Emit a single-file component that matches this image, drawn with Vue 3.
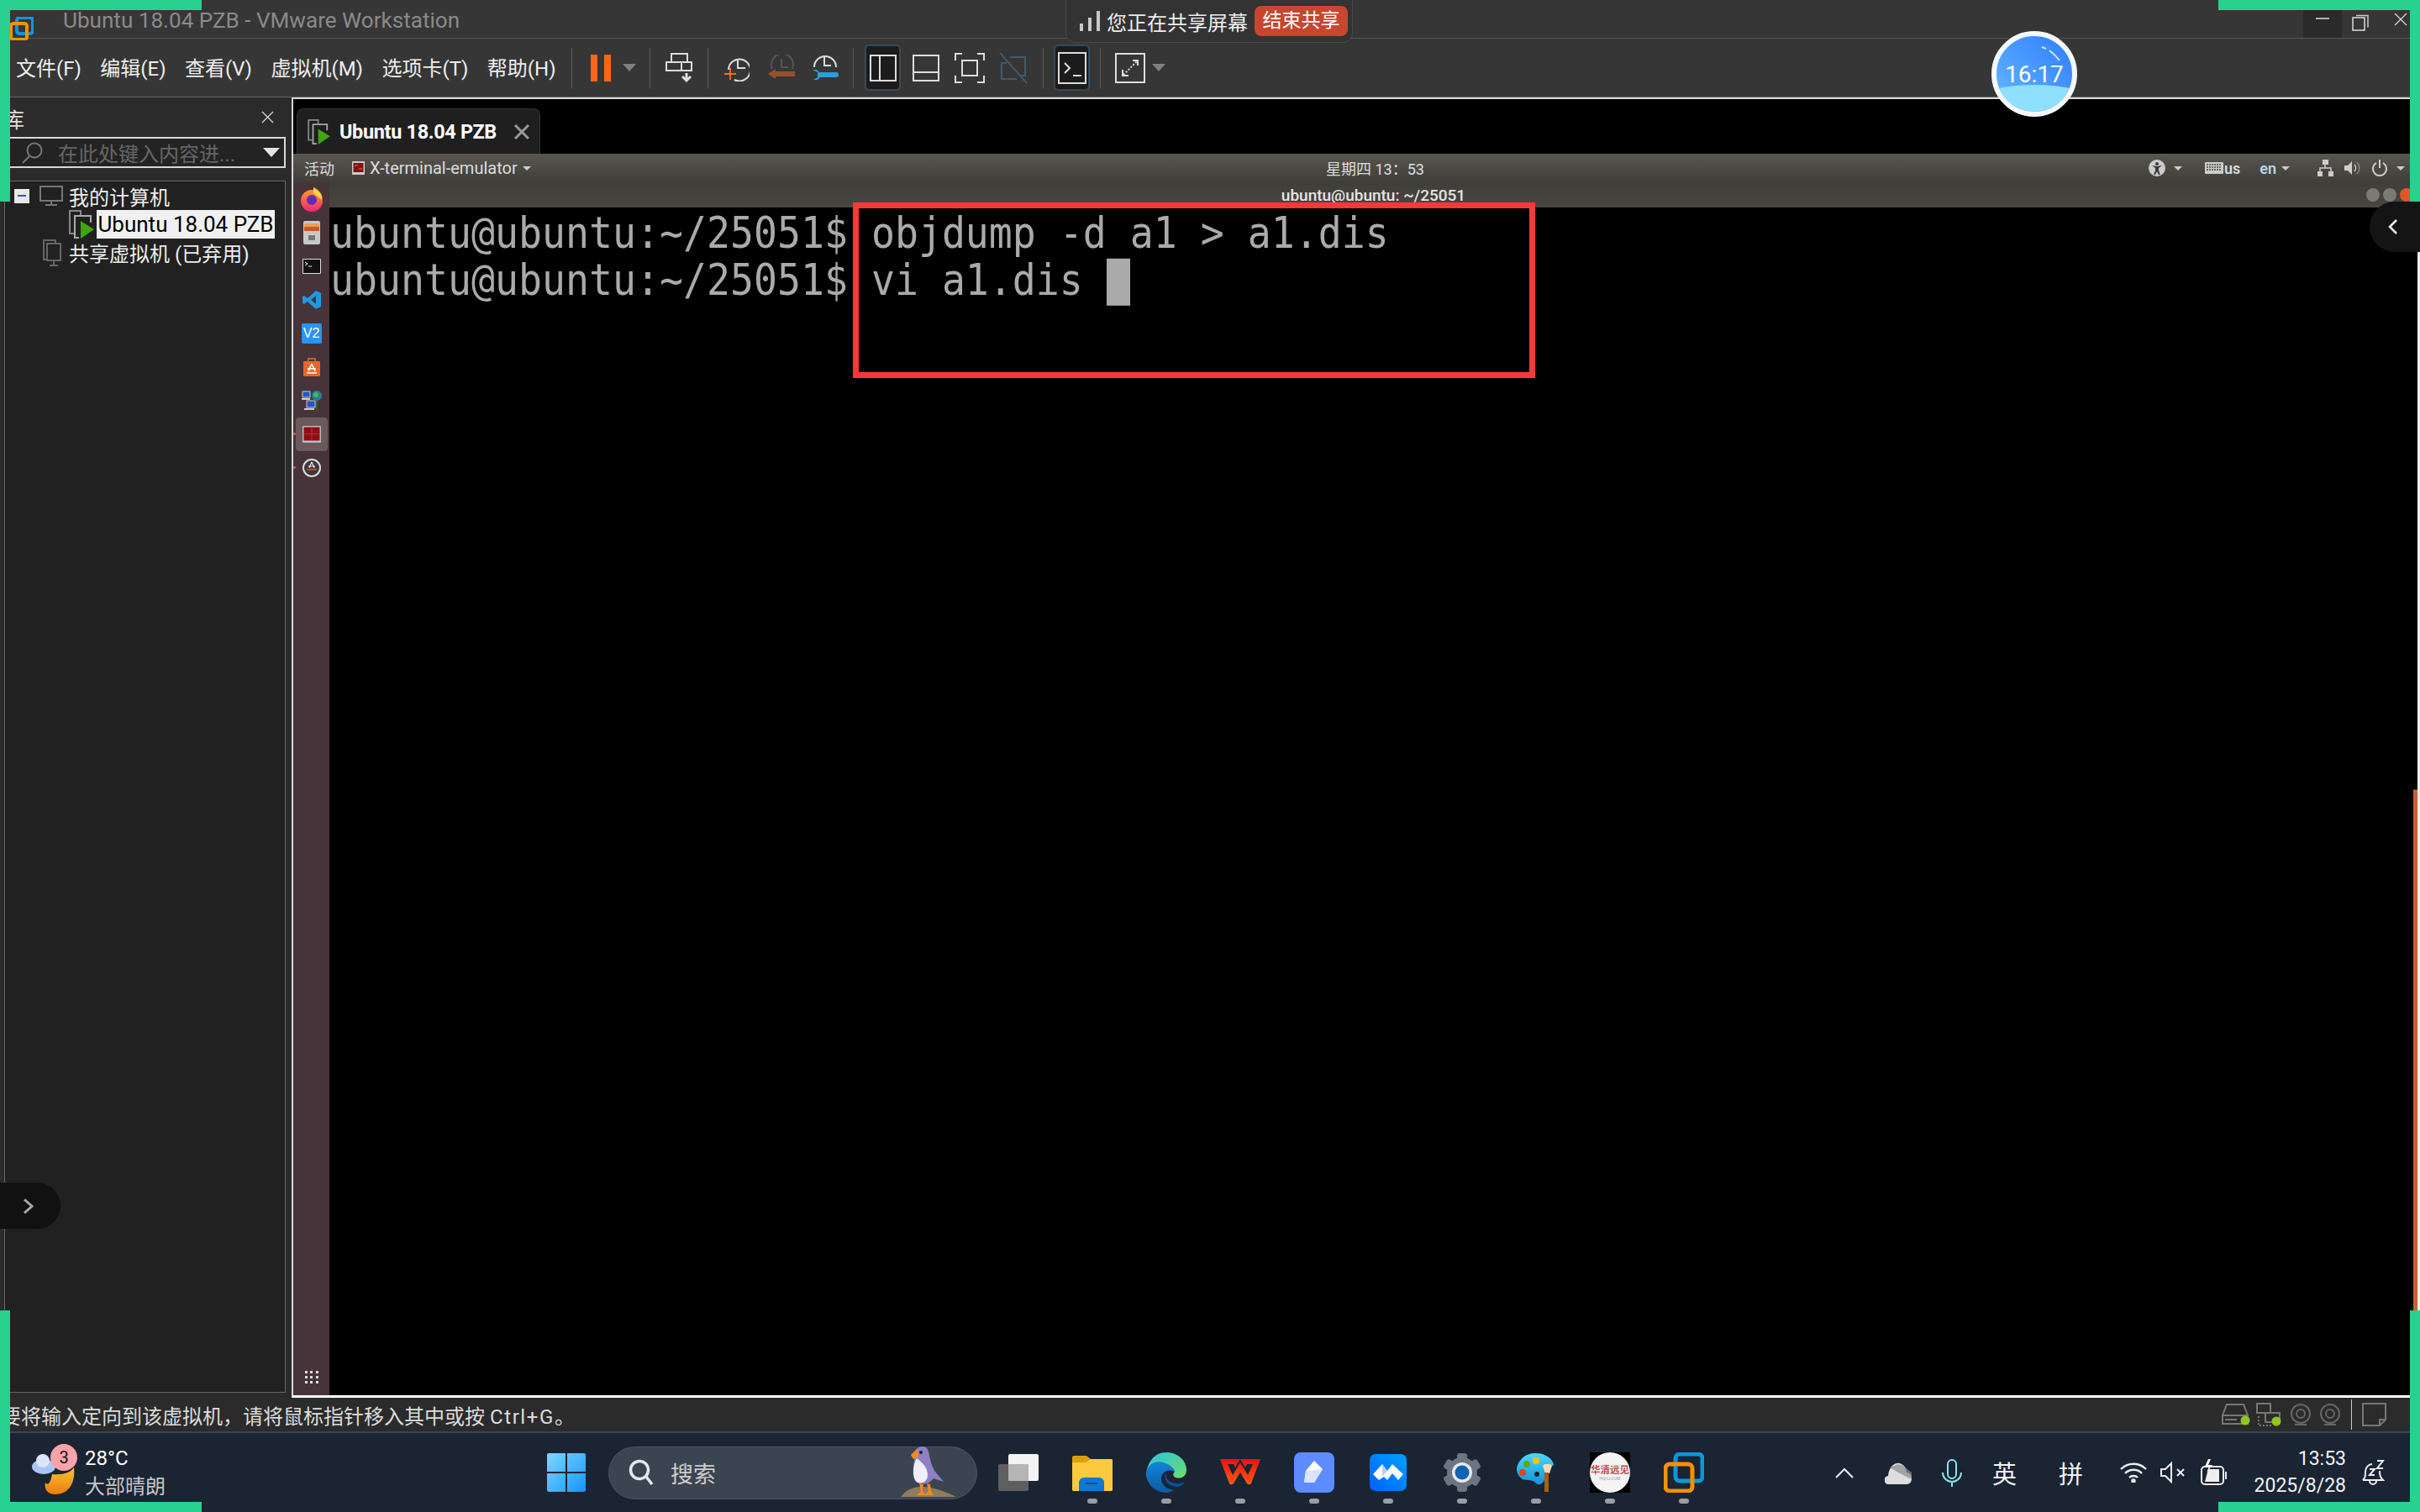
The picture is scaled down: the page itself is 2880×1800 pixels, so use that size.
<script setup>
const menus = ['文件(F)', '编辑(E)', '查看(V)', '虚拟机(M)', '选项卡(T)', '帮助(H)']
</script>

<template>
  <div class="screen">
    <header class="titlebar">
      <svg class="app-logo" viewBox="0 0 28 28"><rect x="8" y="1" width="19" height="19" rx="3" fill="none" stroke="#1296d8" stroke-width="4"/><rect x="1" y="8" width="19" height="19" rx="3" fill="none" stroke="#f59100" stroke-width="4"/></svg>
      <span class="title-text">Ubuntu 18.04 PZB - VMware Workstation</span>
      <div class="win-controls">
        <div class="wc wc-min"><svg viewBox="0 0 46 33" width="46" height="33"><path d="M15 10h16" stroke="#ddd" stroke-width="1.5"/></svg></div>
        <div class="wc wc-max"><svg viewBox="0 0 20 22" width="20" height="22"><path d="M5 3.500h14v14" fill="none" stroke="#ccc" stroke-width="1.500"/><rect x="1" y="6" width="14" height="15" fill="#363636" stroke="#ddd" stroke-width="1.500"/></svg></div>
        <div class="wc wc-close"><svg viewBox="0 0 16 16" width="16" height="16"><path d="M1 1l14 14M15 1L1 15" stroke="#ddd" stroke-width="1.200"/></svg></div>
      </div>
    </header>

    <nav class="toolbar">
      <div class="menus"><span v-for="m in menus" :key="m">{{ m }}</span></div>
      <i class="sep s1"></i>
      <svg class="t-pause" width="24" height="32" viewBox="0 0 24 32"><rect width="8" height="32" fill="#ff6418"/><rect x="16" width="8" height="32" fill="#ff6418"/></svg>
      <svg class="t-drop m14" width="16" height="9" viewBox="0 0 16 9"><path d="M0 0h16L8 9z" fill="#808080"/></svg>
      <i class="sep m16"></i>
      <svg class="m18" width="32" height="36" viewBox="0 0 32 36" fill="none" stroke="#ddd" stroke-width="2"><path d="M7 11V1h19v10"/><path d="M1 11h30v10H1zM19 11v10"/><path d="M25 24v9M20 28l5 5 5-5" stroke-width="3"/></svg>
      <i class="sep m18"></i>
      <svg class="m19" width="30" height="32" viewBox="0 0 30 32" fill="none"><path d="M5 18a13 13 0 1 1 7 12" stroke="#ddd" stroke-width="2"/><path d="M16 6v10h9" stroke="#ddd" stroke-width="2"/><path d="M0 23h14M7 16v14" stroke="#ff6a1c" stroke-width="2"/></svg>
      <svg class="m22" width="32" height="32" viewBox="0 0 32 32" fill="none"><path d="M5 17a13 13 0 1 1 24 0" stroke="#555" stroke-width="2"/><path d="M16 5v10h8" stroke="#555" stroke-width="2"/><path d="M0 23l9-6v3h23v6H9v3z" fill="#95502a"/></svg>
      <svg class="m20" width="32" height="32" viewBox="0 0 32 32" fill="none"><path d="M3 15a13 13 0 1 1 26 0" stroke="#ddd" stroke-width="2"/><path d="M15 3v10h8" stroke="#ddd" stroke-width="2"/><path d="M1 18h5l3 3h20a3 3 0 0 1 0 6H10l-3 3H2l5-3v-6z" fill="#2b9de0"/></svg>
      <i class="sep m17"></i>
      <div class="t-box m14"><svg width="32" height="32" viewBox="0 0 32 32" fill="none" stroke="#ddd" stroke-width="2"><path d="M1 1h30v30H1zM12 1v30"/></svg></div>
      <svg class="m15" width="32" height="32" viewBox="0 0 32 32" fill="none" stroke="#ddd" stroke-width="2"><path d="M1 1h30v30H1zM1 21h30"/></svg>
      <svg class="m18" width="36" height="36" viewBox="0 0 36 36" fill="none" stroke="#ddd" stroke-width="2"><path d="M9 1H1v8M27 1h8v8M9 35H1v-8M27 35h8v-8"/><path d="M9 9h18v18H9z"/></svg>
      <svg class="m16" width="36" height="36" viewBox="0 0 36 36" fill="none" stroke="#42596b" stroke-width="2"><path d="M2 0l32 36M14 5h18v22h-4M22 31H4V12h6"/></svg>
      <i class="sep m17"></i>
      <div class="t-box m13"><svg width="34" height="38" viewBox="0 0 34 38" fill="none" stroke="#ddd" stroke-width="2"><path d="M1 1h32v36H1z"/><path d="M8 13l6 6-6 6M18 28h10"/></svg></div>
      <i class="sep m13"></i>
      <svg class="m17" width="36" height="36" viewBox="0 0 36 36" fill="none" stroke="#ddd" stroke-width="2"><path d="M1 1h34v34H1z"/><path d="M10 26l16-16" stroke-dasharray="2 2"/><path d="M21 9h6v6M9 20v7h7"/></svg>
      <svg class="m8 t-drop" width="16" height="9" viewBox="0 0 16 9"><path d="M0 0h16L8 9z" fill="#808080"/></svg>
    </nav>

    <main class="main">
      <aside class="sidebar">
        <div class="lib-head">
          <span class="lib-name">库</span>
          <svg width="15" height="15" viewBox="0 0 15 15"><path d="M1 1l13 13M14 1L1 14" stroke="#ddd" stroke-width="1.200"/></svg>
        </div>
        <div class="lib-search">
          <svg width="26" height="26" viewBox="0 0 26 26" fill="none" stroke="#777" stroke-width="2"><circle cx="16" cy="10" r="8.500"/><path d="M10 17l-8 8"/></svg>
          <span class="placeholder">在此处键入内容进...</span>
          <svg class="search-drop" width="20" height="11" viewBox="0 0 20 11"><path d="M0 0h20L10 11z" fill="#e4e4e4"/></svg>
        </div>
        <div class="tree">
          <div class="tree-row r0">
            <span class="minus"><b></b></span>
            <svg width="28" height="24" viewBox="0 0 28 24" fill="none" stroke="#777" stroke-width="2"><path d="M1 1h26v17H1zM14 18v5M7 23h14"/></svg>
            <span>我的计算机</span>
          </div>
          <div class="tree-row r1">
            <svg width="31" height="34" viewBox="0 0 31 34" fill="none"><path d="M14 6V1H1v27h5" stroke="#888" stroke-width="2"/><path d="M26 15V7H7v26h5" stroke="#aaa" stroke-width="2"/><path d="M14 13l16 10-16 11z" fill="#3fa60f"/></svg>
            <span class="selected">Ubuntu 18.04 PZB</span>
          </div>
          <div class="tree-row r2">
            <svg width="22" height="32" viewBox="0 0 22 32" fill="none" stroke="#666" stroke-width="2"><path d="M15 4V1H1v23h3"/><path d="M5 5h16v20H5zM13 25v5M8 31h10"/></svg>
            <span>共享虚拟机 (已弃用)</span>
          </div>
        </div>
      </aside>

      <section class="vm">
        <div class="tabrow">
          <div class="tab">
            <svg width="28" height="30" viewBox="0 0 31 34" fill="none"><path d="M14 6V1H1v27h5" stroke="#888" stroke-width="2"/><path d="M26 15V7H7v26h5" stroke="#aaa" stroke-width="2"/><path d="M14 13l16 10-16 11z" fill="#3fa60f"/></svg>
            <span class="tab-text">Ubuntu 18.04 PZB</span>
            <svg class="tab-x" width="18" height="18" viewBox="0 0 18 18"><path d="M1 1l16 16M17 1L1 17" stroke="#999" stroke-width="3"/></svg>
          </div>
        </div>

        <div class="gnome-top">
          <div class="gt-left">
            <span class="gt-act">活动</span>
            <svg class="gt-term" width="15" height="16" viewBox="0 0 15 16"><rect width="15" height="16" rx="1" fill="#ccc"/><rect x="1.500" y="2" width="12" height="11" fill="#8a0f14"/><path d="M3 5h4M8 9h4" stroke="#e66" stroke-width="1"/></svg>
            <span class="gt-app">X-terminal-emulator</span>
            <i class="mini-arrow"></i>
          </div>
          <span class="gt-date">星期四 13：53</span>
          <div class="gt-right">
            <svg width="20" height="20" viewBox="0 0 20 20"><circle cx="10" cy="10" r="10" fill="#ccc"/><circle cx="10" cy="5" r="2" fill="#3c3b37"/><path d="M4 7l6 1 6-1-4 3v3l2 5h-2l-2-4-2 4H6l2-5v-3z" fill="#3c3b37"/></svg>
            <i class="mini-arrow a10"></i>
            <svg class="m27" width="22" height="14" viewBox="0 0 22 14"><rect width="22" height="14" rx="1" fill="#ccc"/><path d="M2 3h18M2 6h18M2 9h18" stroke="#444" stroke-width="1.500" stroke-dasharray="2 1"/></svg>
            <span class="gt-kb">us</span>
            <span class="gt-en">en</span>
            <i class="mini-arrow a6"></i>
            <svg class="m33" width="19" height="20" viewBox="0 0 19 20" fill="#ccc"><rect x="6" width="7" height="6"/><rect y="14" width="6" height="6"/><rect x="13" y="14" width="6" height="6"/><path d="M9 6v4M3 14v-4h13v4" fill="none" stroke="#ccc" stroke-width="1.500"/></svg>
            <svg class="m13" width="19" height="20" viewBox="0 0 19 20" fill="none"><path d="M0 7h4l5-5v16l-5-5H0z" fill="#ccc"/><path d="M12 6a6 6 0 0 1 0 8" stroke="#ccc" stroke-width="1.500"/><path d="M15 3a10 10 0 0 1 0 14" stroke="#888" stroke-width="1.500"/></svg>
            <svg class="m14" width="18" height="20" viewBox="0 0 18 20" fill="none" stroke="#ccc" stroke-width="2"><path d="M5 4a8 8 0 1 0 8 0M9 0v10"/></svg>
            <i class="mini-arrow a11"></i>
          </div>
        </div>

        <div class="desktop">
          <div class="dock">
            <div class="dock-item">
              <svg width="30" height="30" viewBox="0 0 30 30"><defs><linearGradient id="ff" x1="0" y1="0" x2="0" y2="1"><stop offset="0" stop-color="#ff9b20"/><stop offset="1" stop-color="#f0247d"/></linearGradient></defs><circle cx="15" cy="17" r="13" fill="url(#ff)"/><path d="M17 1c8 4 11 9 10 15L17 8z" fill="#ffd23c"/><circle cx="15" cy="16" r="6" fill="#5a2fb5"/></svg>
            </div>
            <div class="dock-item">
              <svg width="20" height="28" viewBox="0 0 20 28"><rect width="20" height="28" rx="2" fill="#c8c8c8"/><rect x="1" y="3" width="18" height="4" fill="#f19a5a"/><rect x="1" y="7" width="18" height="5" fill="#c15c22"/><rect x="6" y="17" width="8" height="6" fill="#777"/></svg>
            </div>
            <div class="dock-item">
              <svg width="22" height="18" viewBox="0 0 22 18"><rect width="22" height="18" rx="1" fill="#ddd"/><rect x="1" y="1" width="20" height="16" fill="#111"/><path d="M3 4l3 2-3 2M7 9h4" stroke="#eee" fill="none"/></svg>
            </div>
            <div class="dock-item">
              <svg width="22" height="22" viewBox="0 0 22 22"><path d="M16 0l6 3v16l-6 3L6 13l-4 3-2-1v-8l2-1 4 3zM16 6l-6 5 6 5z" fill="#1f9ae0" fill-rule="evenodd"/></svg>
            </div>
            <div class="dock-item"><span class="vm-badge">V2</span></div>
            <div class="dock-item">
              <svg width="20" height="22" viewBox="0 0 20 22"><path d="M6 4V1h8v3" fill="none" stroke="#e96c2f" stroke-width="1.500"/><rect y="4" width="20" height="18" rx="1" fill="#e8652a"/><path d="M10 7l-4 9M10 7l4 9M5 13h10M4 18h12" stroke="#fff" stroke-width="1.500"/></svg>
            </div>
            <div class="dock-item">
              <svg width="24" height="24" viewBox="0 0 24 24"><rect x="1" y="1" width="9" height="7" fill="#2456c9" stroke="#ccc"/><rect x="6" y="12" width="10" height="8" fill="#2456c9" stroke="#ccc"/><path d="M0 10h10M3 22h12" stroke="#ccc" stroke-width="2"/><path d="M18 12v12" stroke="#2b8a1b"/><circle cx="18" cy="6" r="6" fill="#2a7d9a"/><circle cx="17" cy="5" r="3" fill="#3fbb55"/></svg>
            </div>
            <div class="dock-item active">
              <i class="run-dot"></i>
              <svg width="22" height="20" viewBox="0 0 22 20"><rect width="22" height="20" rx="1" fill="#bbb"/><rect x="1.500" y="1.500" width="19" height="16" fill="#8e0f18"/><path d="M1.500 9.500h19M11 1.500v16" stroke="#c22a33"/></svg>
            </div>
            <div class="dock-item">
              <i class="run-dot"></i>
              <svg width="22" height="22" viewBox="0 0 22 22"><circle cx="11" cy="11" r="10" fill="#3a3a3a" stroke="#ddd" stroke-width="2"/><path d="M11 4l-3 7M11 4l3 7M7 9h8" stroke="#eee" stroke-width="1.200"/><path d="M5 13h12" stroke="#e6502a" stroke-width="1.500"/></svg>
            </div>
            <div class="dock-grid"><i v-for="n in 9" :key="n"></i></div>
          </div>

          <div class="window">
            <div class="win-title">
              <span>ubuntu@ubuntu: ~/25051</span>
              <div class="win-btns">
                <i class="wb"></i><i class="wb"></i><i class="wb wb-x"></i>
              </div>
            </div>
            <div class="terminal">
              <div class="line">ubuntu@ubuntu:~/25051$ objdump -d a1 &gt; a1.dis</div>
              <div class="line">ubuntu@ubuntu:~/25051$ vi a1.dis <span class="cursor"></span></div>
            </div>
          </div>
        </div>
      </section>
    </main>

    <footer class="statusbar">
      <span class="status-text">要将输入定向到该虚拟机，请将鼠标指针移入其中或按 <span class="latin">Ctrl+G</span>。</span>
      <div class="status-icons">
        <svg width="35" height="26" viewBox="0 0 35 26" fill="none"><path d="M1 24V14L6 1h20l5 13v10zM1 14h30M4 19h14" stroke="#777" stroke-width="2"/><circle cx="28" cy="20" r="5.500" fill="#8dc81d"/></svg>
        <svg width="32" height="28" viewBox="0 0 32 28" fill="none"><path d="M2 1h16v11H2zM12 12h17v11H12z" stroke="#777" stroke-width="2"/><path d="M4 16v11h16" stroke="#777" stroke-width="2" stroke-dasharray="2 2"/><circle cx="25" cy="22" r="5.500" fill="#8dc81d"/></svg>
        <svg class="m4" width="26" height="26" viewBox="0 0 26 26" fill="none" stroke="#666" stroke-width="2"><circle cx="13" cy="12" r="11"/><circle cx="13" cy="12" r="5"/><path d="M6 25h14"/></svg>
        <svg class="m4" width="26" height="26" viewBox="0 0 26 26" fill="none" stroke="#666" stroke-width="2"><circle cx="13" cy="12" r="11"/><circle cx="13" cy="12" r="5"/><path d="M6 25h14"/></svg>
        <i class="status-sep"></i>
        <svg class="m7" width="29" height="28" viewBox="0 0 29 28" fill="none" stroke="#777" stroke-width="2"><path d="M1 1h27v19l-7 7H1zM28 20h-7v7"/></svg>
      </div>
    </footer>

    <footer class="taskbar">
      <div class="weather">
        <div class="weather-icon">
          <svg width="54" height="56" viewBox="0 0 54 56"><defs><linearGradient id="moon" x1="0" y1="0" x2="0" y2="1"><stop offset="0" stop-color="#f7c32c"/><stop offset="1" stop-color="#ee7b12"/></linearGradient></defs><path d="M26 30c14 1 22-2 26-8 2 18-6 32-22 32-9 0-14-6-12-14 3 4 6 1 8-10z" fill="url(#moon)"/><ellipse cx="16" cy="21" rx="14" ry="9" fill="#a9c6f2"/><circle cx="15" cy="14" r="8" fill="#dbe8fb"/></svg>
          <span class="badge">3</span>
        </div>
        <div class="weather-text"><span class="temp">28°C</span><span class="cond">大部晴朗</span></div>
      </div>

      <svg class="start" width="46" height="46" viewBox="0 0 46 46"><defs><linearGradient id="win" x1="0" y1="0" x2="1" y2="1"><stop offset="0" stop-color="#7fd6ff"/><stop offset="1" stop-color="#1296ff"/></linearGradient></defs><path d="M0 2a2 2 0 0 1 2-2h20v22H0zM24 0h20a2 2 0 0 1 2 2v20H24zM0 24h22v22H2a2 2 0 0 1-2-2zM24 24h22v20a2 2 0 0 1-2 2H24z" fill="url(#win)"/></svg>

      <div class="search">
        <svg width="30" height="32" viewBox="0 0 30 32" fill="none" stroke="#e8e8e8" stroke-width="3.500"><circle cx="13" cy="13" r="10.500"/><path d="M21 21l7 9"/></svg>
        <span class="search-text">搜索</span>
        <svg class="puffin" width="70" height="62" viewBox="0 0 70 62"><path d="M2 62c6-8 14-12 26-12s28 6 40 12z" fill="#8f7c5a"/><path d="M24 46l2 10-6 4h12l-4-5 1-8zM33 46l2 9-5 5h11l-3-5-1-8z" fill="#f08a24"/><path d="M20 8c2-8 13-8 15 0 2 10 4 18 8 24l10 12-12-4c-6 8-16 9-21 1-6-9-2-22 0-33z" fill="#8f7fc4"/><path d="M21 16c5 4 13 10 13 20 0 7-6 11-12 9-6-3-7-18-1-29z" fill="#f0eef8"/><path d="M22 4l-8 8 3 5 6-3z" fill="#f08a24"/><circle cx="26" cy="9" r="2" fill="#222"/></svg>
      </div>

      <div class="apps">
        <div class="app">
          <svg width="48" height="44" viewBox="0 0 48 44"><rect y="12" width="36" height="32" rx="2" fill="#5f5f5f"/><rect x="12" width="36" height="32" rx="2" fill="#f4f4f4"/><rect x="12" y="12" width="24" height="20" fill="#b5b5b5"/></svg>
        </div>
        <div class="app">
          <svg width="48" height="44" viewBox="0 0 48 44"><path d="M0 4a2 2 0 0 1 2-2h15l5 4h24a2 2 0 0 1 2 2v34a2 2 0 0 1-2 2H2a2 2 0 0 1-2-2z" fill="#d99f0a"/><path d="M0 10l16 0 6-4h24a2 2 0 0 1 2 2v34a2 2 0 0 1-2 2H2a2 2 0 0 1-2-2z" fill="#fdc93f"/><path d="M8 44V34a6 6 0 0 1 6-6h18a6 6 0 0 1 6 6v10z" fill="#0f79cf"/><path d="M16 35h14" stroke="#09508f" stroke-width="2"/></svg>
          <i class="pill"></i>
        </div>
        <div class="app">
          <svg width="48" height="48" viewBox="0 0 48 48"><defs><linearGradient id="edge1" x1="0" y1="0" x2="1" y2="1"><stop offset="0" stop-color="#2cc0e0"/><stop offset="1" stop-color="#6de06a"/></linearGradient><linearGradient id="edge2" x1="0" y1="0" x2="0" y2="1"><stop offset="0" stop-color="#1186d8"/><stop offset="1" stop-color="#0c59a4"/></linearGradient></defs><path d="M24 0c14 0 24 10 24 21 0 8-7 11-13 9-4-2-3-5-1-7-3-7-13-10-21-6C6 20 1 26 0 30 0 13 9 0 24 0z" fill="url(#edge1)"/><path d="M0 24C3 12 14 9 23 13c6 2 10 6 11 10-8-4-15 0-16 7-1 7 5 14 15 15-3 2-6 3-9 3C10 48 0 37 0 24z" fill="url(#edge2)"/><path d="M22 28c0 8 8 13 14 13 4 0 8-2 10-6-6 3-12 3-17 0-4-2-6-7-5-11-1 1-2 2-2 4z" fill="#0d4f98"/></svg>
          <i class="pill"></i>
        </div>
        <div class="app">
          <svg width="48" height="32" viewBox="0 0 48 32"><defs><linearGradient id="wps" x1="0" y1="0" x2="0" y2="1"><stop offset="0" stop-color="#e8120f"/><stop offset="1" stop-color="#ff5a14"/></linearGradient></defs><path d="M0 0h48L37 29a3 3 0 0 1-5 0l-8-13-8 13a3 3 0 0 1-5 0zM9 6l6 13 9-15 9 15 6-13h-7l-2 4-6-10-6 10-2-4z" fill="url(#wps)" fill-rule="evenodd"/></svg>
          <i class="pill"></i>
        </div>
        <div class="app">
          <svg width="48" height="48" viewBox="0 0 48 48"><rect width="48" height="48" rx="8" fill="#5c8cff"/><path d="M24 10l10 10-10 16H12l2-14z" fill="#fff"/><path d="M12 36l2-14 20-2-10 16z" fill="#dbe4ff"/></svg>
          <i class="pill"></i>
        </div>
        <div class="app">
          <svg width="44" height="44" viewBox="0 0 44 44"><defs><linearGradient id="tm" x1="0" y1="1" x2="1" y2="0"><stop offset="0" stop-color="#0060ff"/><stop offset="1" stop-color="#00a0ff"/></linearGradient></defs><rect width="44" height="44" rx="7" fill="url(#tm)"/><path d="M4 24l11-12 6 8 6-8 13 12-6 7-7-8-6 8-4-4-6 4z" fill="#fff"/><path d="M15 12l6 8-6 7z" fill="#b9ccff"/></svg>
          <i class="pill"></i>
        </div>
        <div class="app">
          <svg width="48" height="46" viewBox="0 0 48 46"><g fill="#6c7680"><rect x="18" y="0" width="12" height="46" rx="3"/><rect x="18" y="0" width="12" height="46" rx="3" transform="rotate(60 24 23)"/><rect x="18" y="0" width="12" height="46" rx="3" transform="rotate(120 24 23)"/></g><circle cx="24" cy="23" r="18" fill="#6c7680"/><circle cx="24" cy="23" r="12" fill="#e6e9ec"/><circle cx="24" cy="23" r="8.500" fill="#0f63b0"/></svg>
          <i class="pill"></i>
        </div>
        <div class="app">
          <svg width="46" height="46" viewBox="0 0 46 46"><defs><linearGradient id="pal" x1="0" y1="0" x2="0" y2="1"><stop offset="0" stop-color="#4fd6f6"/><stop offset="1" stop-color="#1393dd"/></linearGradient></defs><path d="M22 0c14 0 22 8 22 15-3-1-8 0-9 3-1 6 0 14-5 18-4 3-7 0-9-2-5-3-10-1-14-3C1 27 0 22 0 18 2 8 10 0 22 0z" fill="url(#pal)"/><circle cx="12" cy="13" r="4" fill="#5aa821"/><circle cx="23" cy="9" r="4" fill="#ffc10e"/><circle cx="7" cy="23" r="4" fill="#d44a14"/><circle cx="24" cy="25" r="3" fill="#123"/><path d="M31 15l2-2h7l2 2-3 9h-5z" fill="#efdcb6"/><rect x="33" y="23" width="5" height="23" fill="#a26312"/></svg>
          <i class="pill"></i>
        </div>
        <div class="app">
          <div class="hq"><div class="hq-circle"><span class="hq-a">华清远见</span><span class="hq-b">HQYJ.COM</span></div></div>
          <i class="pill"></i>
        </div>
        <div class="app">
          <svg width="48" height="48" viewBox="0 0 48 48" fill="none"><rect x="14" y="2" width="32" height="32" rx="5" stroke="#0c97d9" stroke-width="5"/><rect x="2" y="14" width="32" height="32" rx="5" stroke="#f59100" stroke-width="5"/></svg>
          <i class="pill"></i>
        </div>
      </div>

      <div class="tray">
        <svg width="22" height="13" viewBox="0 0 22 13" fill="none" stroke="#eee" stroke-width="2"><path d="M1 12l10-10 10 10"/></svg>
        <svg class="m37" width="32" height="28" viewBox="0 0 32 28"><path d="M5 28a5 5 0 0 1-1-10C5 6 14 0 20 4c5 2 6 8 6 10 4 0 6 3 6 7 0 4-2 7-6 7z" fill="#dedede"/><path d="M6 8l10 6 16 8v-8l-10-8-6-2z" fill="#8a8a8a" opacity=".7"/></svg>
        <svg class="m36" width="24" height="33" viewBox="0 0 24 33" fill="none" stroke="#8fe2ec" stroke-width="2"><rect x="7" y="1" width="10" height="22" rx="5"/><path d="M1 16a11 11 0 0 0 22 0M12 27v6"/></svg>
        <span class="ime m36">英</span>
        <span class="ime m50">拼</span>
        <svg class="m44" width="32" height="24" viewBox="0 0 32 24" fill="none" stroke="#eee" stroke-width="2.500"><path d="M1 8a21 21 0 0 1 30 0M6 13a14 14 0 0 1 20 0M11 18a7 7 0 0 1 10 0"/><circle cx="16" cy="22" r="1.500" fill="#eee"/></svg>
        <svg class="m16" width="31" height="26" viewBox="0 0 31 26" fill="none" stroke="#eee" stroke-width="2"><path d="M1 9h5l7-7v22l-7-7H1zM20 9l8 8M28 9l-8 8"/></svg>
        <svg class="m17" width="32" height="32" viewBox="0 0 32 32" fill="none"><rect x="1" y="9" width="26" height="21" rx="4" stroke="#eee" stroke-width="2"/><path d="M30 15v9" stroke="#eee" stroke-width="2"/><path d="M9 12h13v15H5z" fill="#eee"/><path d="M9 0L5 9h5l-3 7 7-9H9l3-7z" fill="#fff"/></svg>
        <div class="clock-text"><span>13:53</span><span>2025/8/28</span></div>
        <svg class="bell" width="28" height="32" viewBox="0 0 28 32" fill="none" stroke="#eee" stroke-width="2"><path d="M2 25c3-3 3-5 3-10 0-5 4-9 8-9M22 14c0 6 1 8 4 11H2M10 26a4 4 0 0 0 8 0"/><path d="M19 2h7l-7 9h7M10 12h6l-6 7h6"/></svg>
      </div>
    </footer>

    <!-- overlays on top of the captured screen -->
    <div class="share">
      <svg width="24" height="24" viewBox="0 0 24 24" fill="#c8c8c8"><rect y="15" width="4" height="9"/><rect x="10" y="8" width="4" height="16"/><rect x="20" width="4" height="24"/></svg>
      <span>您正在共享屏幕</span>
      <span class="share-btn">结束共享</span>
    </div>
    <div class="float-clock"><div class="water"></div><svg class="gloss" width="26" height="20" viewBox="0 0 26 20" fill="none" stroke="#cfe6ff" stroke-width="2"><path d="M1 1l5 2M10 5c4 3 8 7 12 12"/></svg><span>16:17</span></div>
    <div class="red-box"></div>
    <div class="side-tab tab-right"><svg width="12" height="20" viewBox="0 0 12 20" fill="none" stroke="#eee" stroke-width="2.500"><path d="M10 2L2 10l8 8"/></svg></div>
    <div class="side-tab tab-left"><svg width="14" height="20" viewBox="0 0 14 20" fill="none" stroke="#aaa" stroke-width="3"><path d="M2 2l9 8-9 8"/></svg></div>
    <div class="strip"></div>
    <div class="corner tl"></div><div class="corner tr"></div><div class="corner bl"></div><div class="corner br"></div>
  </div>
</template>

<style scoped>
.screen { position: relative; width: 2880px; height: 1800px; overflow: hidden; display: flex; flex-direction: column; background: #363636; font-family: Roboto, "Noto Sans CJK SC", sans-serif; color: #eee; }
svg { flex: none; display: block; }

.titlebar { height: 45px; flex: none; display: flex; align-items: center; position: relative; padding-left: 12px; background: #363636; border-bottom: 1px solid #555; }
.app-logo { width: 28px; height: 28px; margin-top: 22px; }
.title-text { margin-left: 35px; font-size: 26.100px; color: #8a8a8a; margin-top: 2px; }
.win-controls { margin-left: auto; display: flex; align-items: flex-start; align-self: flex-start; padding-top: 12px; padding-right: 15px; }
.wc-min { width: 46px; height: 33px; background: #2a2a2a; }
.wc-max { margin-left: 12px; margin-top: 3px; }
.wc-close { margin-left: 30px; margin-top: 3px; }

.toolbar { height: 69px; flex: none; display: flex; align-items: center; background: #363636; border-bottom: 1px solid #666; box-sizing: content-box; padding-left: 19px; }
.menus { display: flex; gap: 22.500px; font-size: 24px; color: #eee; width: 645px; white-space: nowrap; margin-top: -2px; }
.sep { width: 1px; height: 48px; background: #5c5c5c; flex: none; }
.s1 { margin-left: 16px; }
.t-pause { margin-left: 22px; }
.m4 { margin-left: 4px; }
.m7 { margin-left: 7px; }
.m8 { margin-left: 8px; }
.m13 { margin-left: 13px; }
.m14 { margin-left: 14px; }
.m15 { margin-left: 15px; }
.m16 { margin-left: 16px; }
.m17 { margin-left: 17px; }
.m18 { margin-left: 18px; }
.m19 { margin-left: 19px; }
.m20 { margin-left: 20px; }
.m22 { margin-left: 22px; }
.m27 { margin-left: 27px; }
.m33 { margin-left: 33px; }
.m36 { margin-left: 36px; }
.m37 { margin-left: 37px; }
.m44 { margin-left: 44px; }
.m50 { margin-left: 50px; }
.t-box { width: 41px; height: 53px; box-sizing: border-box; flex: none; display: flex; align-items: center; justify-content: center; background: #1c1c1c; border: 1px solid #1e4a6e; border-radius: 4px; box-shadow: 0 0 0 1px #4a4a4a; }

.main { height: 1548px; flex: none; display: flex; background: #232323; }
.sidebar { width: 347px; flex: none; display: flex; flex-direction: column; box-sizing: border-box; padding: 0 7px 6px 0; background: #2b2b2b; }
.lib-head { height: 47px; flex: none; display: flex; align-items: center; justify-content: space-between; padding: 0 14px 0 0; }
.lib-name { font-size: 25px; margin-left: 4px; color: #ddd; margin-top: 2px; }
.lib-search { height: 37px; flex: none; box-sizing: border-box; border: 2px solid #d8d8d8; border-left: 0; display: flex; align-items: center; padding-left: 25px; background: #232323; }
.placeholder { font-size: 24px; color: #666; margin-left: 18px; white-space: nowrap; width: 244px; }
.tree { flex: 1; margin: 15px 0 0 5px; border: 1px solid #666; background: #212121; font-size: 24px; }
.tree-row { height: 34px; display: flex; align-items: center; white-space: nowrap; color: #eee; }
.r0 { padding-left: 11px; }
.r0 svg { margin-left: 12px; margin-right: 7px; }
.minus { width: 18px; height: 17px; background: #e8e8e8; display: flex; align-items: center; justify-content: center; }
.minus b { width: 10px; height: 2px; background: #3b55a8; }
.r1 { padding-left: 76px; }
.selected { background: #f0f0f0; color: #000; width: 212px; height: 34px; line-height: 34px; text-align: center; margin-left: 2px; font-size: 26px; }
.r2 { padding-left: 45px; height: 33px; }
.r2 svg { margin-right: 9px; }

.vm { flex: 1; min-width: 0; display: flex; flex-direction: column; background: #000; box-sizing: border-box; border: 2px solid #d8d8d8; border-width: 2px 3px 3px 2px; border-bottom-color: #fff; border-right-color: #eee; }
.tabrow { height: 65px; flex: none; display: flex; align-items: flex-end; padding-left: 4px; background: #000; }
.tab { width: 290px; height: 54px; box-sizing: border-box; display: flex; align-items: center; padding-left: 12px; background: #1f1f1f; border: 1px solid #333; border-bottom: 0; border-radius: 8px 8px 0 0; }
.tab-text { margin-left: 10px; font-size: 23.400px; font-weight: 700; color: #fff; white-space: nowrap; letter-spacing: -.3px; width: 208px; }

.gnome-top { height: 34px; flex: none; display: flex; align-items: center; background: linear-gradient(#59564f, #3f3e39); color: #ddd; font-size: 18px; }
.gt-left { width: 1229px; flex: none; display: flex; align-items: center; }
.gt-act { margin-left: 13px; font-size: 18px; }
.gt-term { margin-left: 21px; }
.gt-app { margin-left: 6px; white-space: nowrap; font-size: 20px; }
.mini-arrow { width: 0; height: 0; border: 5px solid transparent; border-top: 5px solid #ccc; border-bottom: 0; margin-left: 6px; flex: none; }
.a10 { margin-left: 10px; }
.a6 { margin-left: 6px; }
.a11 { margin-left: 11px; }
.gt-date { white-space: nowrap; }
.gt-right { margin-left: auto; padding-right: 15px; display: flex; align-items: center; }
.gt-kb { margin-left: 1px; font-size: 18px; font-weight: 600; }
.gt-en { margin-left: 23px; font-size: 18px; font-weight: 600; color: #b8d4e8; }

.desktop { flex: 1; min-height: 0; display: flex; }
.dock { width: 43px; flex: none; display: flex; flex-direction: column; align-items: center; box-sizing: border-box; background: #47343a; position: relative; }
.dock-item { width: 38px; height: 40px; display: flex; align-items: center; justify-content: center; position: relative; flex: none; border-radius: 4px; }
.dock-item.active { background: #6a5a5c; }
.run-dot { position: absolute; left: -3px; top: 18px; width: 3px; height: 3px; border-radius: 50%; background: #e95420; }
.vm-badge { width: 24px; height: 24px; background: #2b93f0; border-radius: 2px; color: #fff; font-size: 16px; text-align: center; line-height: 24px; font-family: "Liberation Sans", sans-serif; }
.dock-grid { margin-top: auto; margin-bottom: 14px; width: 16px; display: grid; grid-template-columns: repeat(3, 3px); gap: 3px; justify-content: space-between; }
.dock-grid i { width: 3px; height: 3px; background: #ddd; }

.window { flex: 1; min-width: 0; display: flex; flex-direction: column; }
.win-title { height: 30px; flex: none; position: relative; display: flex; align-items: center; justify-content: center; background: linear-gradient(#3f3e39, #48463f); color: #e4e4e4; font-size: 19px; font-weight: 500; }
.win-btns { position: absolute; right: 5px; top: 7px; display: flex; gap: 4px; }
.wb { width: 16px; height: 16px; border-radius: 50%; background: #7b7a74; }
.wb-x { background: #e0562c; }
.terminal { flex: 1; background: #000; padding: 5px 0 0 1px; font-family: "DejaVu Sans Mono", monospace; font-size: 46.500px; line-height: 55.500px; color: #aaa; white-space: pre; }
.line { height: 55.500px; transform: scaleY(1.12); transform-origin: 0 70%; }
.cursor { display: inline-block; width: 28px; height: 50px; vertical-align: -11px; background: #aaa; }

.statusbar { height: 42px; flex: none; box-sizing: border-box; display: flex; align-items: center; background: #2b2b2b; border-bottom: 2px solid #3a4450; }
.status-text { font-size: 24px; color: #ddd; margin-left: 1px; white-space: nowrap; }
.latin { letter-spacing: 1.600px; }
.status-icons { margin-left: auto; padding-right: 40px; display: flex; align-items: center; gap: 5px; }
.status-sep { width: 1px; height: 36px; background: #ccc; margin-left: 7px; }

.taskbar { height: 94px; flex: none; display: flex; align-items: center; background: #1a2433; position: relative; }
.weather { width: 651px; flex: none; box-sizing: border-box; padding-left: 36px; display: flex; align-items: center; }
.weather-icon { position: relative; width: 65px; height: 56px; flex: none; }
.badge { position: absolute; left: 24px; top: -6px; width: 32px; height: 32px; border-radius: 50%; background: #fca2a9; color: #111; font-size: 20px; text-align: center; line-height: 32px; }
.weather-text { display: flex; flex-direction: column; line-height: 34px; font-size: 24px; white-space: nowrap; }
.temp { color: #fff; }
.cond { color: #c6c6c6; }
.start { flex: none; }
.search { width: 439px; height: 63px; margin-left: 27px; flex: none; box-sizing: border-box; display: flex; align-items: center; padding-left: 23px; border-radius: 32px; background: #3b4451; border: 1px solid #4b5460; }
.search-text { font-size: 27px; color: #ccc; margin-left: 20px; }
.puffin { margin-left: auto; margin-right: 22px; margin-top: -4px; }
.apps { flex: none; margin-left: 5px; display: flex; }
.app { width: 88px; height: 94px; display: flex; align-items: center; justify-content: center; position: relative; }
.pill { position: absolute; left: 38px; bottom: 10px; width: 12px; height: 6px; border-radius: 3px; background: #9a9ea4; }
.hq { width: 48px; height: 48px; background: #000; overflow: hidden; }
.hq-circle { width: 48px; height: 48px; border-radius: 50%; background: #f4f4f4; display: flex; flex-direction: column; align-items: center; justify-content: center; }
.hq-a { font-size: 11.500px; color: #c24a4a; white-space: nowrap; font-weight: 700; line-height: 14px; }
.hq-b { font-size: 5px; color: #999; line-height: 7px; white-space: nowrap; }
.tray { margin-left: auto; display: flex; align-items: center; padding-right: 42px; }
.ime { font-size: 29px; color: #f2f2f2; }
.clock-text { width: 141px; flex: none; display: flex; flex-direction: column; align-items: flex-end; font-size: 23px; line-height: 32px; color: #f2f2f2; }
.bell { margin-left: 18px; }

.share { position: absolute; left: 1268px; top: -1px; width: 342px; height: 52px; box-sizing: border-box; display: flex; align-items: center; padding-left: 16px; background: #333; border: 1px solid #484848; border-radius: 0 0 12px 12px; font-size: 24px; color: #eee; }
.share > span:first-of-type { margin-left: 8px; white-space: nowrap; }
.share-btn { margin-left: 8px; width: 111px; height: 36px; line-height: 36px; text-align: center; border-radius: 8px; background: #c8452f; color: #fff; font-size: 23px; }
.float-clock { position: absolute; left: 2370px; top: 37px; width: 102px; height: 102px; box-sizing: border-box; border: 6px solid #f4f9ff; border-radius: 50%; overflow: hidden; background: linear-gradient(45deg, #66b8ff, #2f7dff); display: flex; align-items: center; justify-content: center; font-size: 28px; color: #fff; }
.float-clock span { position: relative; }
.water { position: absolute; left: -20px; right: -20px; top: 58px; height: 60px; border-radius: 50% 50% 0 0 / 16px 16px 0 0; background: #8fe0ff; }
.gloss { position: absolute; left: 53px; top: 12px; }
.red-box { position: absolute; left: 1015px; top: 241px; width: 812px; height: 209px; box-sizing: border-box; border: 7px solid #f83838; }
.side-tab { position: absolute; display: flex; align-items: center; }
.tab-right { left: 2820px; top: 240px; width: 60px; height: 60px; border-radius: 30px 0 0 30px; background: #141414; padding-left: 22px; box-sizing: border-box; }
.tab-left { left: 0; top: 1408px; width: 72px; height: 55px; border-radius: 0 28px 28px 0; background: #111; padding-left: 27px; box-sizing: border-box; }
.strip { position: absolute; left: 2872px; top: 940px; width: 5px; height: 640px; background: #c56236; }
.corner { position: absolute; width: 240px; height: 240px; box-sizing: border-box; border: 0 solid #28d190; }
.tl { left: 0; top: 0; border-width: 12px 0 0 12px; }
.tr { right: 0; top: 0; border-width: 12px 12px 0 0; }
.bl { left: 0; bottom: 0; border-width: 0 0 12px 12px; }
.br { right: 0; bottom: 0; border-width: 0 12px 12px 0; }
</style>
